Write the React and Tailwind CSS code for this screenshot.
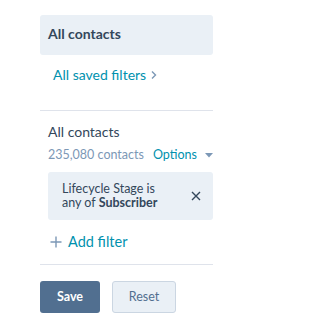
export default function App() {
  return (
    <div className="w-[255px] h-[331px] bg-white" style={{ fontFamily: 'Lato, "Noto Sans", sans-serif' }}>
      <div className="ml-[40px] w-[173px] pt-[15px] flex flex-col">
        <div className="h-[40px] rounded-[3px] bg-[#eaf0f6] px-2 pb-[3px] flex items-center text-[14px] font-bold text-[#33475b]">
          All contacts
        </div>
        <div className="h-[38px] flex items-center pl-[13px] text-[14px] text-[#0091ae]">
          All saved filters
          <svg width="8" height="10" viewBox="0 0 8 10" className="ml-[4px] mt-[1px] shrink-0">
            <path d="M2 1.5 L5.5 5 L2 8.5" stroke="#7c98b6" strokeWidth="1.4" fill="none" />
          </svg>
        </div>
        <div className="h-[17px]" />
        <div className="h-px bg-[#dfe3eb]" />
        <div className="pl-2 flex flex-col">
          <div className="h-[34px] flex items-end pb-[3px] text-[14px] text-[#33475b]">All contacts</div>
          <div className="h-[16px] flex items-center whitespace-nowrap text-[12.5px] mt-[2px]">
            <span className="text-[#7c98b6]">235,080 contacts</span>
            <span className="ml-[9px] text-[#0091ae]">Options</span>
            <svg width="8" height="5" viewBox="0 0 8 5" className="ml-[8px] shrink-0">
              <path d="M0 0 L8 0 L4 4.5 Z" fill="#7c98b6" />
            </svg>
          </div>
          <div className="mt-[9px] h-[48px] rounded-[3px] bg-[#eaf0f6] pl-[14px] pr-[12px] flex items-center justify-between text-[12.5px] leading-[14px] text-[#33475b]">
            <div>
              <div>Lifecycle Stage is</div>
              <div>
                any of <span className="font-bold">Subscriber</span>
              </div>
            </div>
            <svg width="10" height="10" viewBox="0 0 10 10" className="shrink-0">
              <path d="M1 1 L9 9 M9 1 L1 9" stroke="#33475b" strokeWidth="1.4" />
            </svg>
          </div>
          <div className="h-[44px] flex items-center text-[14.5px] text-[#0091ae]">
            <svg width="12" height="12" viewBox="0 0 12 12" className="ml-[2px] mr-[6px] shrink-0">
              <path d="M6 0.5 V11.5 M0.5 6 H11.5" stroke="#7c98b6" strokeWidth="1.4" />
            </svg>
            Add filter
          </div>
        </div>
        <div className="h-px bg-[#dfe3eb]" />
        <div className="mt-[16px] flex gap-[12px]">
          <button className="w-[60px] h-[32px] rounded-[3px] bg-[#516f90] text-white text-[12.5px] font-bold">Save</button>
          <button className="w-[64px] h-[32px] rounded-[3px] bg-[#eaf0f6] border border-[#cbd6e2] text-[#516f90] text-[12.5px]">Reset</button>
        </div>
      </div>
    </div>
  );
}
